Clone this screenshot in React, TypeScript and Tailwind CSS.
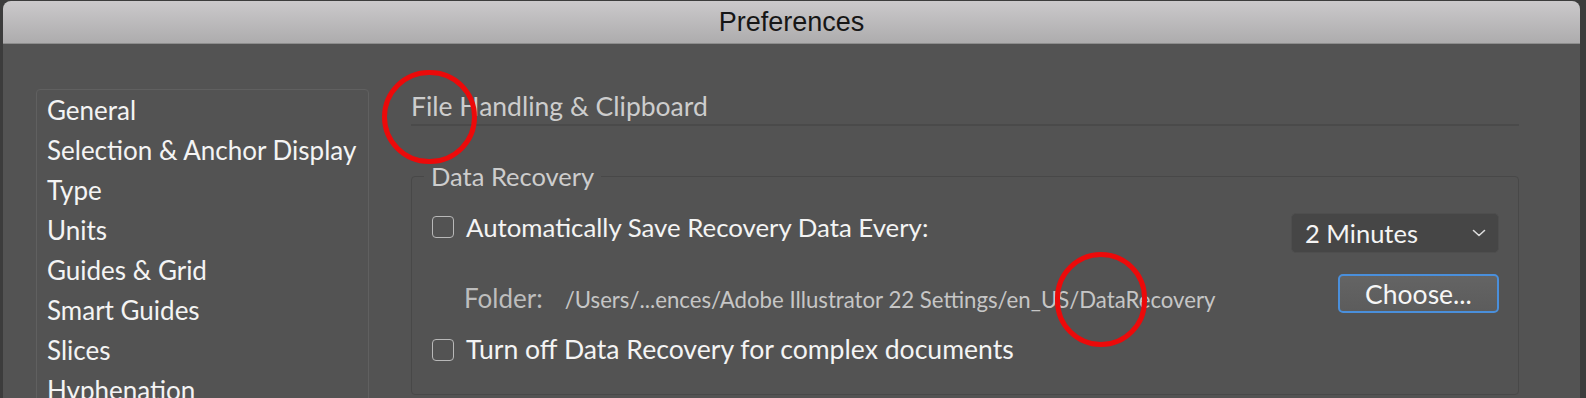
const sections = [
  'General',
  'Selection & Anchor Display',
  'Type',
  'Units',
  'Guides & Grid',
  'Smart Guides',
  'Slices',
  'Hyphenation',
];

const ui = "font-['Lato','Liberation_Sans',sans-serif]";

function Checkbox() {
  return <span className="w-[22px] h-[22px] shrink-0 rounded-[4px] border-[1.5px] border-[#b8b8b8]" />;
}

export default function App() {
  return (
    <div className={`w-[1586px] h-[398px] overflow-hidden bg-[#3c3c3c] pt-[1px] pl-[3px] ${ui}`}>
      <div className="relative w-[1577px] h-[397px] rounded-t-[8px] overflow-hidden bg-[#535353]">
        {/* title bar */}
        <div className="h-[43px] flex items-center justify-center bg-gradient-to-b from-[#cbc9cb] to-[#adacad] border-b border-[#8d8d8d]">
          <span className="font-['Liberation_Sans',Arial,sans-serif] text-[27px] text-[#161616]">Preferences</span>
        </div>

        <div className="flex pl-[33px] pt-[45px]">
          {/* sidebar list */}
          <div className="w-[333px] h-[330px] shrink-0 rounded-[4px] border border-[#606060] pl-[10px]">
            {sections.map(s => (
              <div key={s} className="text-[26px] leading-[40px] text-[#f4f4f4] whitespace-nowrap">{s}</div>
            ))}
          </div>

          {/* panel */}
          <div className="ml-[42px] w-[1108px]">
            <div className="mt-[2px] pb-[3px] border-b-2 border-[#4a4a4a] text-[26.5px] leading-[30px] text-[#cdcdcd]">
              File Handling &amp; Clipboard
            </div>

            <fieldset className="mt-[35px] rounded-[4px] border border-[#484848]">
              <legend className="ml-[12px] px-[7px] text-[25.5px] leading-[30px] text-[#cdcdcd]">Data Recovery</legend>
              <div className="pl-[20px] pr-[19px] pt-[21px] pb-[29px]">
                <div className="flex justify-between">
                  <label className="flex items-center gap-[12px] h-[30px] text-[25.8px] text-[#f4f4f4]">
                    <Checkbox />
                    Automatically Save Recovery Data Every:
                  </label>
                  <div className="mt-[1px] w-[208px] h-[40px] flex items-center justify-between rounded-[5px] border border-[#4e4e4e] bg-[#464646] pl-[13px] pr-[12px] text-[25.5px] text-[#f4f4f4]">
                    2 Minutes
                    <svg width="14" height="8" viewBox="0 0 14 8" fill="none" stroke="#dcdcdc" strokeWidth="1.6" strokeLinecap="round" strokeLinejoin="round">
                      <path d="M1.5 1.5 L7 6.5 L12.5 1.5" />
                    </svg>
                  </div>
                </div>

                <div className="mt-[21px] flex justify-between items-start">
                  <div className="pl-[32px] pt-[9px] flex items-baseline leading-[30px]">
                    <span className="text-[26px] text-[#bdbdbd]">Folder:</span>
                    <span className="ml-[22px] text-[22.2px] text-[#c6c6c6] whitespace-nowrap">
                      /Users/...ences/Adobe Illustrator 22 Settings/en_US/DataRecovery
                    </span>
                  </div>
                  <button className="w-[161px] h-[39px] rounded-[5px] border-2 border-[#4a8fdb] bg-gradient-to-b from-[#646464] to-[#5c5c5c] text-[26.5px] leading-[30px] text-[#f6f6f6]">
                    Choose...
                  </button>
                </div>

                <label className="mt-[20px] flex items-center gap-[12px] h-[30px] text-[26.6px] text-[#f4f4f4]">
                  <Checkbox />
                  Turn off Data Recovery for complex documents
                </label>
              </div>
            </fieldset>
          </div>
        </div>

        {/* red annotation circles */}
        <div className="absolute left-[379px] top-[69px] w-[95px] h-[94px] rounded-full border-[5px] border-[#ec0a0a]" />
        <div className="absolute left-[1052px] top-[251px] w-[92px] h-[95px] rounded-full border-[5px] border-[#ec0a0a]" />
      </div>
    </div>
  );
}
